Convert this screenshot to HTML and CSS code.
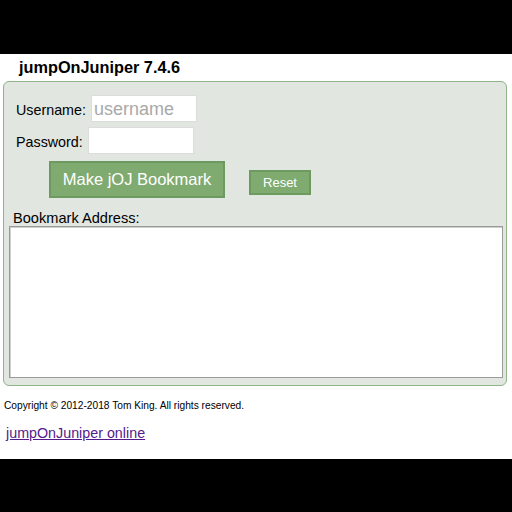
FILE: index.html
```html
<!DOCTYPE html>
<html>
<head>
<meta charset="utf-8">
<link rel="stylesheet" href="styles.css">
</head>
<body>
<div class="band"></div>
<main class="page">
  <h1 class="title">jumpOnJuniper 7.4.6</h1>
  <div class="panel">
    <div class="row">
      <label class="lbl">Username:</label>
      <input class="field" type="text" placeholder="username">
    </div>
    <div class="row row-pass">
      <label class="lbl">Password:</label>
      <input class="field" type="password">
    </div>
    <div class="actions">
      <button class="btn btn-make">Make jOJ Bookmark</button>
      <button class="btn btn-reset">Reset</button>
    </div>
    <div class="addr-label">Bookmark Address:</div>
    <textarea class="addr"></textarea>
  </div>
  <p class="copy">Copyright © 2012-2018 Tom King. All rights reserved.</p>
  <a class="link" href="#">jumpOnJuniper online</a>
</main>
<div class="band"></div>
</body>
</html>
```
FILE: styles.css
```css
html, body {
  margin: 0;
  padding: 0;
  background: #000;
}
body {
  font-family: "Liberation Sans", Arial, sans-serif;
  width: 512px;
  height: 512px;
  overflow: hidden;
}
.band {
  height: 54px;
  background: #000;
}
.page {
  background: #fff;
  height: 405px;
  padding: 0 5px 0 3px;
  box-sizing: border-box;
  overflow: hidden;
}
.title {
  margin: 0;
  padding: 3px 0 0 16px;
  font-size: 16.3px;
  font-weight: bold;
  line-height: 20px;
  height: 27px;
  box-sizing: border-box;
  color: #000;
}
.panel {
  background: #e1e6e0;
  border: 1px solid #8db586;
  border-radius: 6px;
  height: 305px;
  box-sizing: border-box;
  padding: 13px 4px 0 5px;
  display: flex;
  flex-direction: column;
}
.row {
  display: flex;
  align-items: center;
  padding-left: 7px;
}
.row-pass {
  margin-top: 5px;
}
.lbl {
  font-size: 14.3px;
  color: #000;
  margin-right: 5px;
  padding-top: 2px;
}
.field {
  width: 106px;
  height: 27px;
  box-sizing: border-box;
  border: 1px solid #dcdcdc;
  background: #fff;
  font-family: "Liberation Sans", Arial, sans-serif;
  font-size: 18px;
  padding: 2px 2px 0;
  margin: 0;
  outline: none;
}
.field::placeholder {
  color: #a9a9a9;
}
.actions {
  display: flex;
  align-items: flex-start;
  margin-top: 7px;
  padding-left: 40px;
}
.btn {
  background: #7fab71;
  color: #fff;
  border: 2px solid #6c9a5f;
  font-family: "Liberation Sans", Arial, sans-serif;
  margin: 0;
  padding: 0;
  cursor: pointer;
}
.btn-make {
  width: 176px;
  height: 37px;
  font-size: 16.5px;
}
.btn-reset {
  margin-left: 24px;
  margin-top: 9px;
  width: 62px;
  height: 25px;
  font-size: 13px;
}
.addr-label {
  margin-top: 10px;
  font-size: 14.6px;
  line-height: 18px;
  padding-left: 4px;
  padding-top: 1px;
  height: 18px;
  box-sizing: border-box;
  color: #000;
}
.addr {
  margin: 0;
  width: 494px;
  height: 152px;
  box-sizing: border-box;
  border: 1px solid #9a9a9a;
  box-shadow: inset 1px 1px 0 #cfcfcf;
  background: #fff;
  resize: none;
  outline: none;
}
.copy {
  margin: 13px 0 0 1px;
  font-size: 10.2px;
  line-height: 13px;
  color: #000;
}
.link {
  display: inline-block;
  margin: 13px 0 0 3px;
  font-size: 14.3px;
  line-height: 17px;
  color: #551a8b;
  text-decoration: underline;
}
```
